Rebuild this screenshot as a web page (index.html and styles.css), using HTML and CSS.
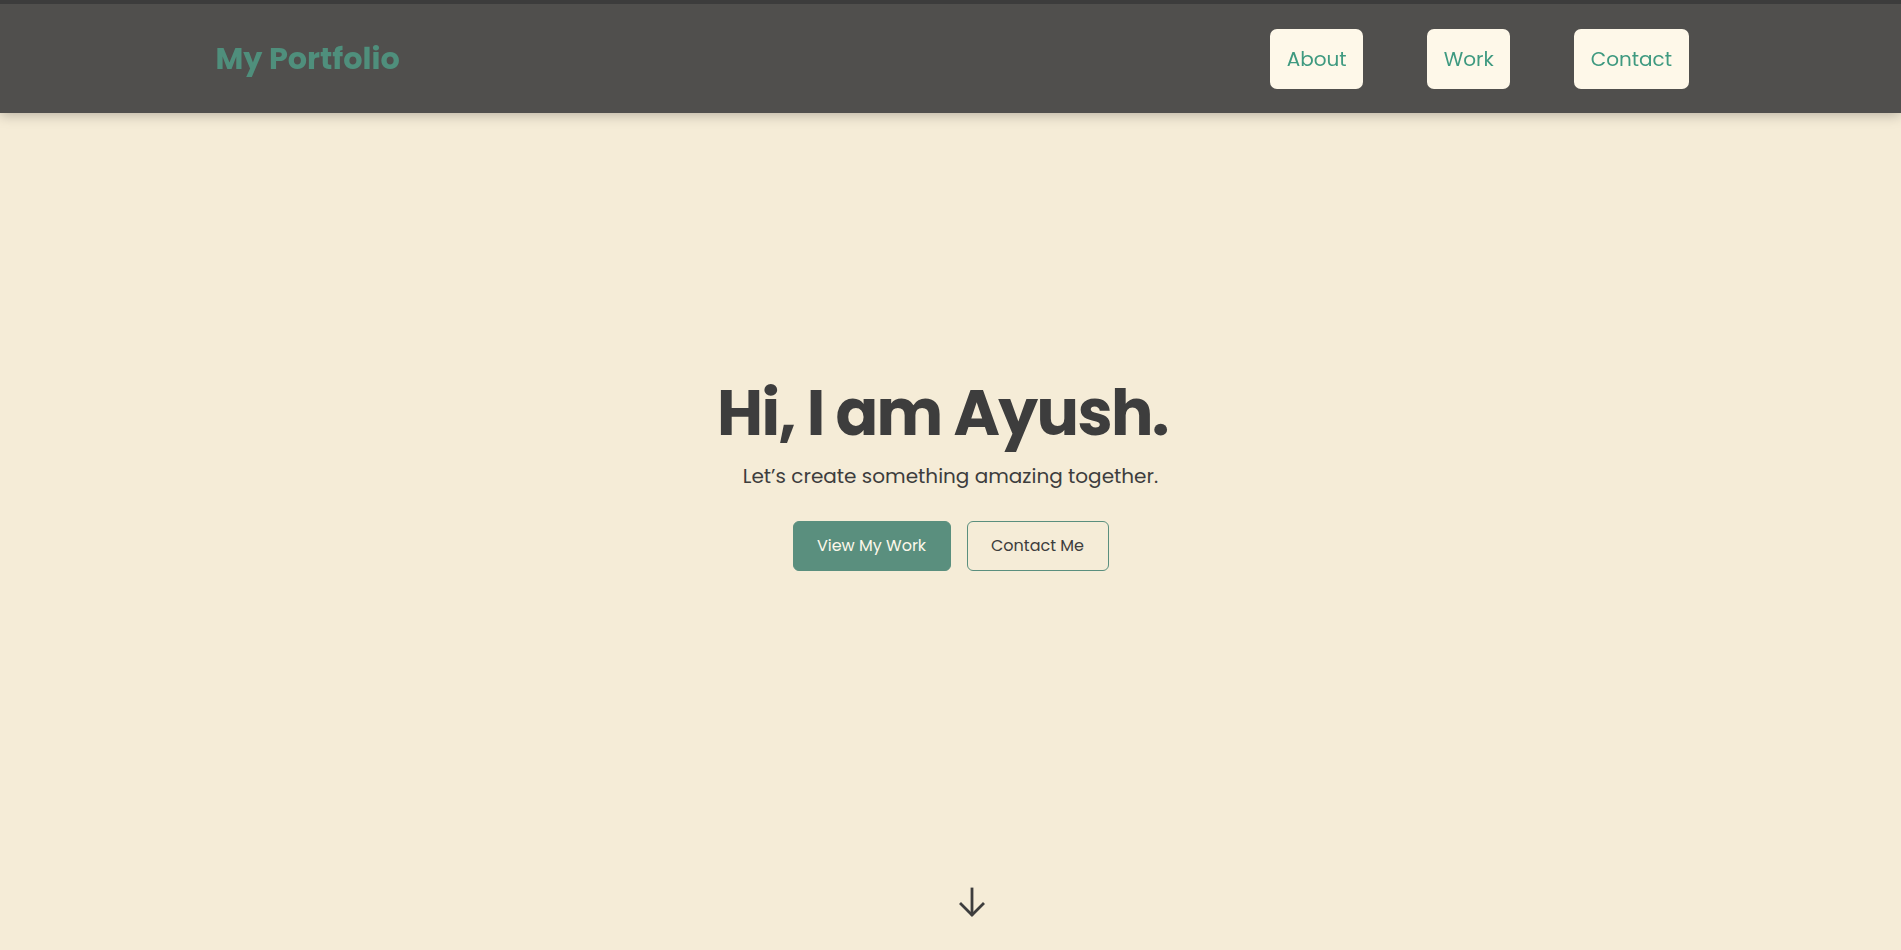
FILE: index.html
```html
<!DOCTYPE html>
<html lang="en">
<head>
<meta charset="utf-8">
<title>My Portfolio</title>
<link rel="stylesheet" href="styles.css">
</head>
<body>
<header class="site-header">
  <div class="header-inner">
    <a class="logo" href="#">My Portfolio</a>
    <nav class="nav">
      <a class="nav-link" href="#about">About</a>
      <a class="nav-link" href="#work">Work</a>
      <a class="nav-link" href="#contact">Contact</a>
    </nav>
  </div>
</header>
<main>
  <section class="hero">
    <div class="hero-content">
      <h1 class="hero-title">Hi, I am Ayush.</h1>
      <p class="hero-sub">Let’s create something amazing together.</p>
      <div class="hero-actions">
        <a class="btn btn-primary" href="#work">View My Work</a>
        <a class="btn btn-outline" href="#contact">Contact Me</a>
      </div>
    </div>
    <a class="scroll-down" href="#about" aria-label="Scroll down">
      <svg width="28" height="30" viewBox="0 0 28 30" fill="none" stroke="#3d3d3d" stroke-width="2.8" stroke-linecap="square">
        <path d="M14 2 V27"/>
        <path d="M3 17 L14 28 L25 17"/>
      </svg>
    </a>
  </section>
</main>
</body>
</html>
```
FILE: styles.css
```css
* { box-sizing: border-box; }
html, body { margin: 0; padding: 0; }
body {
  background: #f5ecd7;
  font-family: "Poppins", "Inter", "Noto Sans", sans-serif;
  color: #3d3d3d;
  overflow: hidden;
}
a { text-decoration: none; }

.site-header {
  position: fixed;
  top: 0; left: 0; right: 0;
  height: 113px;
  background: #504f4d;
  border-top: 4px solid #3c3c3c;
  box-shadow: 0 2px 12px rgba(0,0,0,0.25);
  z-index: 10;
}
.header-inner {
  max-width: 1476px;
  margin: 0 auto;
  height: 100%;
  padding-left: 3px;
  display: flex;
  align-items: center;
  justify-content: space-between;
}
.logo {
  color: #4f8f7c;
  font-weight: 700;
  font-size: 30.3px;
}
.nav {
  display: flex;
  gap: 64px;
}
.nav-link {
  display: block;
  background: #fef8e9;
  color: #3f9a80;
  font-size: 20px;
  line-height: 60px;
  height: 60px;
  padding: 0 16.5px;
  border-radius: 7px;
}

.hero {
  position: relative;
  height: 100vh;
  display: flex;
  align-items: center;
  justify-content: center;
  text-align: center;
}
.hero-content {
  display: flex;
  flex-direction: column;
  align-items: center;
  padding-bottom: 3px;
}
.hero-title {
  margin: 0 0 0 -16px;
  font-size: 63px;
  font-weight: 700;
  line-height: 1.2;
  letter-spacing: -1.6px;
  color: #3d3d3d;
}
.hero-sub {
  margin: 9px 0 0;
  font-size: 20px;
  line-height: 30px;
  color: #3d3d3d;
}
.hero-actions {
  display: flex;
  gap: 16px;
  margin-top: 30px;
}
.btn {
  display: block;
  height: 50px;
  line-height: 48px;
  font-size: 16px;
  border-radius: 6px;
  border: 1px solid #5a8f7e;
}
.btn-primary {
  width: 158px;
  background: #5a8f7e;
  color: #fdf8ea;
}
.btn-outline {
  width: 142px;
  background: transparent;
  color: #3d3d3d;
}
.scroll-down {
  position: absolute;
  left: 958px;
  top: 887px;
  display: block;
}
```
